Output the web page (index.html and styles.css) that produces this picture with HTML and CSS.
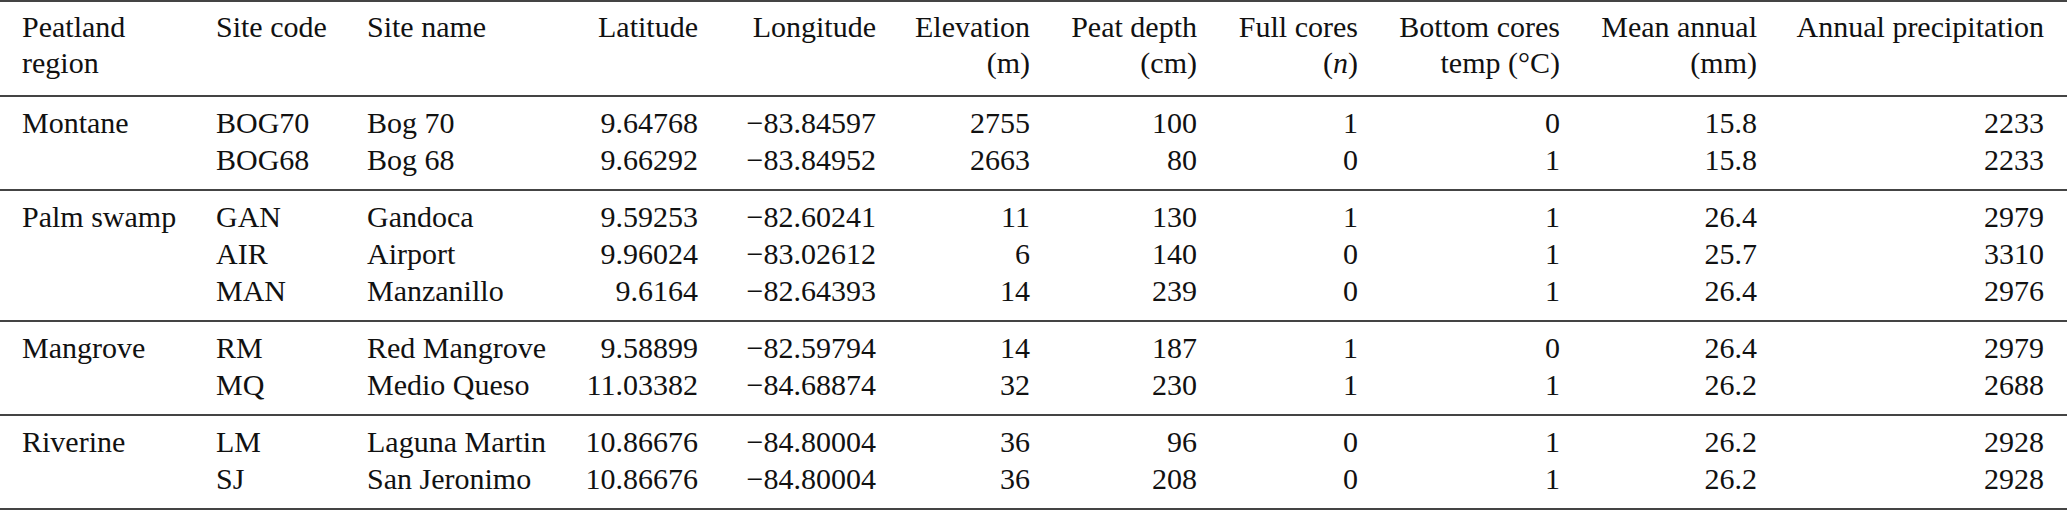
FILE: index.html
```html
<!DOCTYPE html>
<html lang="en">
<head>
<meta charset="utf-8">
<title>Peatland sites</title>
<link rel="stylesheet" href="styles.css">
</head>
<body>
<table class="sites">
  <colgroup>
    <col class="c1"><col class="c2"><col class="c3"><col class="c4"><col class="c5"><col class="c6"><col class="c7"><col class="c8"><col class="c9"><col class="c10"><col class="c11">
  </colgroup>
  <thead>
    <tr>
      <th class="l">Peatland<br>region</th>
      <th class="l">Site code</th>
      <th class="l">Site name</th>
      <th>Latitude</th>
      <th>Longitude</th>
      <th>Elevation<br>(m)</th>
      <th>Peat depth<br>(cm)</th>
      <th>Full cores<br>(<i>n</i>)</th>
      <th>Bottom cores<br>temp (°C)</th>
      <th>Mean annual<br>(mm)</th>
      <th>Annual precipitation</th>
    </tr>
  </thead>
  <tbody>
    <tr class="first"><td class="l">Montane</td><td class="l">BOG70</td><td class="l">Bog 70</td><td>9.64768</td><td>−83.84597</td><td>2755</td><td>100</td><td>1</td><td>0</td><td>15.8</td><td>2233</td></tr>
    <tr class="last"><td class="l"></td><td class="l">BOG68</td><td class="l">Bog 68</td><td>9.66292</td><td>−83.84952</td><td>2663</td><td>80</td><td>0</td><td>1</td><td>15.8</td><td>2233</td></tr>
  </tbody>
  <tbody>
    <tr class="first"><td class="l">Palm swamp</td><td class="l">GAN</td><td class="l">Gandoca</td><td>9.59253</td><td>−82.60241</td><td>11</td><td>130</td><td>1</td><td>1</td><td>26.4</td><td>2979</td></tr>
    <tr><td class="l"></td><td class="l">AIR</td><td class="l">Airport</td><td>9.96024</td><td>−83.02612</td><td>6</td><td>140</td><td>0</td><td>1</td><td>25.7</td><td>3310</td></tr>
    <tr class="last"><td class="l"></td><td class="l">MAN</td><td class="l">Manzanillo</td><td>9.6164</td><td>−82.64393</td><td>14</td><td>239</td><td>0</td><td>1</td><td>26.4</td><td>2976</td></tr>
  </tbody>
  <tbody>
    <tr class="first"><td class="l">Mangrove</td><td class="l">RM</td><td class="l">Red Mangrove</td><td>9.58899</td><td>−82.59794</td><td>14</td><td>187</td><td>1</td><td>0</td><td>26.4</td><td>2979</td></tr>
    <tr class="last"><td class="l"></td><td class="l">MQ</td><td class="l">Medio Queso</td><td>11.03382</td><td>−84.68874</td><td>32</td><td>230</td><td>1</td><td>1</td><td>26.2</td><td>2688</td></tr>
  </tbody>
  <tbody>
    <tr class="first"><td class="l">Riverine</td><td class="l">LM</td><td class="l">Laguna Martin</td><td>10.86676</td><td>−84.80004</td><td>36</td><td>96</td><td>0</td><td>1</td><td>26.2</td><td>2928</td></tr>
    <tr class="last"><td class="l"></td><td class="l">SJ</td><td class="l">San Jeronimo</td><td>10.86676</td><td>−84.80004</td><td>36</td><td>208</td><td>0</td><td>1</td><td>26.2</td><td>2928</td></tr>
  </tbody>
</table>
</body>
</html>
```

FILE: styles.css
```css
html,
body {
  margin: 0;
  padding: 0;
  background: #fff;
}

body {
  font-family: "Liberation Serif";
  font-size: 30px;
}

.sites {
  width: 2067px;
  table-layout: fixed;
  border-collapse: collapse;
  font-family: "Liberation Serif";
  font-size: 30px;
  color: #111;
  border-top: 2px solid #444;
  border-bottom: 2px solid #444;
}

.c1 { width: 205px; }
.c2 { width: 151px; }
.c3 { width: 184px; }
.c4 { width: 169px; }
.c5 { width: 178px; }
.c6 { width: 154px; }
.c7 { width: 167px; }
.c8 { width: 161px; }
.c9 { width: 202px; }
.c10 { width: 197px; }
.c11 { width: 299px; }

.sites th,
.sites td {
  font-family: "Liberation Serif";
  font-size: 30px;
  padding: 0 11px;
  text-align: right;
  white-space: nowrap;
  vertical-align: top;
}

.sites th {
  font-weight: normal;
  line-height: 36px;
  padding-top: 7px;
  padding-bottom: 14px;
}

.sites td {
  line-height: 37px;
}

.sites th:first-child,
.sites td:first-child {
  padding-left: 22px;
}

.sites th:last-child,
.sites td:last-child {
  padding-right: 23px;
}

.sites .l {
  text-align: left;
}

.sites thead {
  border-bottom: 2px solid #444;
}

.sites tbody + tbody {
  border-top: 2px solid #444;
}

.sites tr.first td {
  padding-top: 6.5px;
}

.sites tr.last td {
  padding-bottom: 11.5px;
}
```
